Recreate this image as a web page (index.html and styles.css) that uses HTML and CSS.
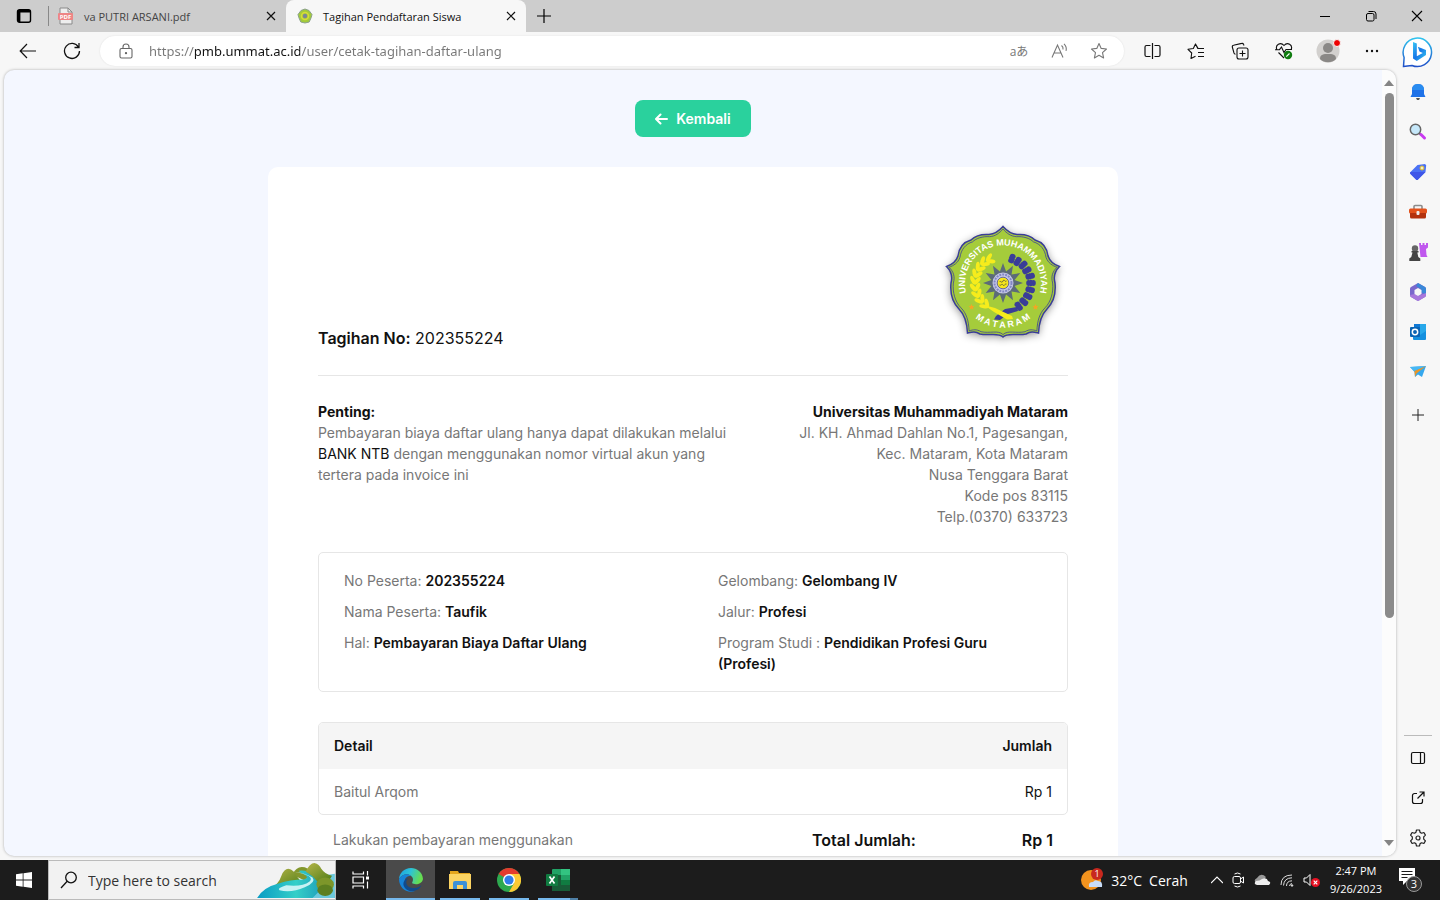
FILE: index.html
```html
<!DOCTYPE html>
<html lang="id">
<head>
    <meta charset="UTF-8">
    <meta name="viewport" content="width=device-width, initial-scale=1.0">
    <title>Tagihan Pendaftaran Siswa</title>
    <link rel="stylesheet" href="styles.css">
</head>
<body>
    <!-- Tab browser -->
    <header class="tabbar">
        <button class="tab-menu" aria-label="Menu tab">
            <svg width="16" height="16" viewBox="0 0 16 16" fill="none" stroke="#000" stroke-width="1.4"><rect x="1.5" y="1.7" width="13" height="12.6" rx="2"/><path d="M2 3.2h12M3.2 2v12" stroke-width="2.4"/></svg>
        </button>
        <div class="tab">
            <svg width="16" height="18" viewBox="0 0 16 18"><path d="M2 1h8l4 4v12H2z" fill="#eee" stroke="#8a8a8a"/><path d="M10 1v4h4" fill="none" stroke="#8a8a8a"/><rect x="0" y="6" width="15" height="7" rx="1" fill="#ee8585"/><text x="7.5" y="11.7" text-anchor="middle" font-size="6" font-weight="700" fill="#fff">PDF</text></svg>
            <span class="tab-title">va PUTRI ARSANI.pdf</span>
            <button class="tab-close" aria-label="Tutup tab"><svg width="10" height="10" viewBox="0 0 10 10" stroke="#111" stroke-width="1.2"><path d="M1 1l8 8M9 1l-8 8"/></svg></button>
        </div>
        <div class="tab active">
            <svg width="16" height="16" viewBox="0 0 16 16"><path d="M8 1l4 1.5 3 4-.8 3-2 4.5L8 15l-4.2-1-2-4.5-.8-3 3-4z" fill="#a3cb3a" stroke="#8aa08a"/><circle cx="8" cy="8" r="3.5" fill="none" stroke="#d8dc38" stroke-width="1.5"/><circle cx="8" cy="8" r="2.2" fill="#7b8596"/></svg>
            <span class="tab-title">Tagihan Pendaftaran Siswa</span>
            <button class="tab-close" aria-label="Tutup tab"><svg width="10" height="10" viewBox="0 0 10 10" stroke="#111" stroke-width="1.2"><path d="M1 1l8 8M9 1l-8 8"/></svg></button>
        </div>
        <button class="tab-new" aria-label="Tab baru"><svg width="14" height="14" viewBox="0 0 14 14" stroke="#000" stroke-width="1.2"><path d="M7 0v14M0 7h14"/></svg></button>
        <div class="window-controls">
            <button aria-label="Kecilkan"><svg width="10" height="10" viewBox="0 0 10 10" stroke="#000"><path d="M0 5.5h10"/></svg></button>
            <button aria-label="Pulihkan"><svg width="12" height="12" viewBox="0 0 12 12" fill="none" stroke="#000"><rect x="1.5" y="3.5" width="7.5" height="7.5" rx="1.5"/><path d="M3.5 1.5h5a2.5 2.5 0 0 1 2.5 2.5v5"/></svg></button>
            <button aria-label="Tutup"><svg width="12" height="12" viewBox="0 0 12 12" stroke="#000" stroke-width="1.1"><path d="M1 1l10 10M11 1L1 11"/></svg></button>
        </div>
    </header>

    <div class="window">
        <div class="browser">
            <!-- Bilah alamat -->
            <nav class="toolbar">
                <button class="nav-button" aria-label="Kembali"><svg width="18" height="16" viewBox="0 0 18 16" fill="none" stroke="#111" stroke-width="1.2"><path d="M17 8H1.5M8 1L1.2 8 8 15"/></svg></button>
                <button class="nav-button" aria-label="Muat ulang"><svg width="18" height="18" viewBox="0 0 18 18" fill="none" stroke="#111" stroke-width="1.3"><path d="M15.5 5.2A7.5 7.5 0 1 0 16.5 9M16 1v4.5h-4.5"/></svg></button>
                <div class="address">
                    <svg width="14" height="16" viewBox="0 0 14 16" fill="none" stroke="#666" stroke-width="1.1"><rect x="1" y="5.5" width="12" height="9.5" rx="1.5"/><path d="M4 5.5V4a3 3 0 0 1 6 0v1.5"/><circle cx="7" cy="10.2" r=".6" fill="#555"/></svg>
                    <input class="address-input" type="text" aria-label="Alamat" value="https://pmb.ummat.ac.id/user/cetak-tagihan-daftar-ulang">
                    <button aria-label="Terjemahkan" class="translate">aあ</button>
                    <button aria-label="Baca nyaring"><svg width="18" height="16" viewBox="0 0 18 16" fill="none" stroke="#777" stroke-width="1.1"><path d="M2 14.5L7.500 2 13 14.500M4 10h7M11.500 2.500a4 4 0 0 1 1.500 4M14 .8a7 7 0 0 1 2 7"/></svg></button>
                    <button aria-label="Favorit"><svg width="18" height="18" viewBox="0 0 18 18" fill="none" stroke="#777" stroke-width="1.1"><path d="M9 1.500l2.200 4.900 5.300.6-4 3.600 1.100 5.300L9 13.300l-4.600 2.600 1.100-5.300-4-3.600 5.300-.6z" stroke-linejoin="round"/></svg></button>
                </div>
                <div class="tools">
                    <button aria-label="Layar terpisah"><svg width="17" height="16" viewBox="0 0 17 16" fill="none" stroke="#111" stroke-width="1.2"><path d="M6.500 2.500h-4a1.500 1.500 0 0 0-1.500 1.500v8a1.500 1.500 0 0 0 1.500 1.500h4M10.500 2.500h4A1.500 1.500 0 0 1 16 4v8a1.500 1.500 0 0 1-1.500 1.500h-4M8.500 0v16"/></svg></button>
                    <button aria-label="Daftar favorit"><svg width="18" height="17" viewBox="0 0 18 17" fill="none" stroke="#111" stroke-width="1.1"><path d="M11 5.200L8.500 1 6.300 5.500 1 6.300l3.700 3.700L4 15.500l4.500-2.300M8.500 1l2.300 4.500H17M11 9.500h6M11 13.500h6" stroke-linejoin="round"/></svg></button>
                    <button aria-label="Koleksi"><svg width="18" height="18" viewBox="0 0 18 18" fill="none" stroke="#111" stroke-width="1.1"><rect x="6" y="6" width="11" height="11" rx="2"/><path d="M11.500 8.500v6M8.500 11.500h6M13 3.500l-.5-1.200a1.500 1.500 0 0 0-1.800-.9L2.500 3.200A1.500 1.500 0 0 0 1.300 5l1.700 6a2 2 0 0 0 1.500 1.300"/></svg></button>
                    <button aria-label="Performa"><svg width="18" height="18" viewBox="0 0 18 18" fill="none" stroke="#111" stroke-width="1.1"><path d="M9 16L3.500 10.500M1.800 7.500C0 3 5.500-.5 9 3.500c3.500-4 9-.5 7.200 4M0 7.700h4.500L6.500 5l2.500 5.500 2-3h6"/><circle cx="13" cy="13" r="4.200" fill="#107c10" stroke="none"/><path d="M11.300 14.700l3.200-3.200" stroke="#fff"/></svg></button>
                    <button aria-label="Profil"><svg width="26" height="26" viewBox="0 0 26 26"><circle cx="13" cy="13" r="11.500" fill="#d2d0ce"/><circle cx="13" cy="10" r="5" fill="#8a8886"/><path d="M5 21c0-5 4-5 8-5s8 0 8 5a11.500 11.500 0 0 1-16 0z" fill="#8a8886"/><circle cx="22" cy="5" r="3.500" fill="#e00" stroke="#f7f7f7"/></svg></button>
                    <button aria-label="Lainnya"><svg width="14" height="4" viewBox="0 0 14 4" fill="#111"><circle cx="2" cy="2" r="1.200"/><circle cx="7" cy="2" r="1.200"/><circle cx="12" cy="2" r="1.200"/></svg></button>
                </div>
            </nav>

            <div class="viewport">
                <main class="page">
                    <button class="back-button">
                        <svg width="13" height="12" viewBox="0 0 13 12" fill="none" stroke="#fff" stroke-width="2" stroke-linecap="round" stroke-linejoin="round"><path d="M12 6H1.500M5.500 1.500L1 6l4.500 4.500"/></svg>
                        Kembali
                    </button>

                    <section class="invoice">
                        <div class="invoice-header">
                            <p class="invoice-number"><b>Tagihan No:</b> 202355224</p>
                            <svg class="invoice-logo" width="130" height="133" viewBox="0 0 130 133">
                                <defs>
                                    <path id="shield" d="M65 9.500C69 14 73 17 79 17.500 86 17 93 19 97 23 104 25 109 31 110 39 112 45 117 48 121.500 49.500 117 54 115 59 117 66 118 76 115 86 109 92 103 98 101 106 100.500 116 96 115 93 114 88 117 79 119 70 115 65 120 60 115 51 119 42 117 37 114 34 115 29.500 116 29 106 27 98 21 92 15 86 12 76 13 66 15 59 13 54 8.500 49.500 13 48 18 45 20 39 21 31 26 25 33 23 37 19 44 17 51 17.500 57 17 61 14 65 9.500z"/>
                                    <path id="topArc" d="M28 75A38 38 0 1 1 102 75"/>
                                    <path id="bottomArc" d="M34 98A44 44 0 0 0 96 98"/>
                                    <path id="star" d="M0-3l.9 2 2.100.2-1.600 1.400.5 2.100L0 1.600l-1.900 1.100.5-2.100L-3-.8l2.100-.2z" fill="#f5a623"/>
                                    <g id="grain"><ellipse cx="-2.600" cy="0" rx="2" ry="4.600" transform="rotate(-32)"/><ellipse cx="2.600" cy="0" rx="2" ry="4.600" transform="rotate(32)"/></g>
                                    <g id="bead"><ellipse cx="-2.300" cy="0" rx="2.500" ry="3"/><ellipse cx="2.300" cy="0" rx="2.500" ry="3"/><path d="M0-3v6" stroke="#3a3d98" stroke-width="2"/></g>
                                    <filter id="glow" x="-20%" y="-20%" width="140%" height="140%"><feDropShadow dx="0" dy="2" stdDeviation="4" flood-color="#000" flood-opacity=".45"/></filter>
                                </defs>
                                <use href="#shield" fill="#a5cc3b" filter="url(#glow)"/>
                                <use href="#shield" fill="#a5cc3b" stroke="#3a3d98" stroke-width="1.500"/>
                                <use href="#shield" fill="none" stroke="#3a3d98" stroke-width=".8" transform="translate(65 66) scale(.955) translate(-65 -66)"/>
                                <g class="logo-text" fill="#fff">
                                    <text><textPath href="#topArc" startOffset="50%" text-anchor="middle">UNIVERSITAS MUHAMMADIYAH</textPath></text>
                                    <text><textPath href="#bottomArc" startOffset="50%" text-anchor="middle">M A T A R A M</textPath></text>
                                </g>
                                <g fill="#f6ec1c" transform="translate(65 66)">
                                    <use href="#grain" transform="rotate(-26) translate(0 -27) rotate(90)"/>
                                    <use href="#grain" transform="rotate(-40) translate(0 -28) rotate(90)"/>
                                    <use href="#grain" transform="rotate(-54) translate(0 -28) rotate(90)"/>
                                    <use href="#grain" transform="rotate(-68) translate(0 -28) rotate(90)"/>
                                    <use href="#grain" transform="rotate(-82) translate(0 -28) rotate(90)"/>
                                    <use href="#grain" transform="rotate(-96) translate(0 -28) rotate(90)"/>
                                    <use href="#grain" transform="rotate(-110) translate(0 -28) rotate(90)"/>
                                    <use href="#grain" transform="rotate(-124) translate(0 -28) rotate(90)"/>
                                    <use href="#grain" transform="rotate(-138) translate(0 -28) rotate(90)"/>
                                </g>
                                <g fill="#3a3d98" transform="translate(65 66)">
                                    <use href="#bead" transform="rotate(20) translate(0 -26) rotate(90)"/>
                                    <use href="#bead" transform="rotate(34) translate(0 -26) rotate(90)"/>
                                    <use href="#bead" transform="rotate(48) translate(0 -27) rotate(90)"/>
                                    <use href="#bead" transform="rotate(62) translate(0 -27) rotate(90)"/>
                                    <use href="#bead" transform="rotate(76) translate(0 -28) rotate(90)"/>
                                    <use href="#bead" transform="rotate(90) translate(0 -28) rotate(90)"/>
                                    <use href="#bead" transform="rotate(104) translate(0 -28) rotate(90)"/>
                                    <use href="#bead" transform="rotate(118) translate(0 -28) rotate(90)"/>
                                    <use href="#bead" transform="rotate(132) translate(0 -28) rotate(90)"/>
                                    <use href="#bead" transform="rotate(146) translate(0 -28) rotate(90)"/>
                                </g>
                                <path d="M79 90L67 92l-9 7-2 3.500 6 .5L70 97l10-3z" fill="#3a3d98"/>
                                <path d="M46 88l11 3 17 8 1 3-6 .5L56 95z" fill="#f6ec1c"/>
                                <path d="M85 66l-8.400 3.100 5.700 6.900-8.800-1.500 1.500 8.800-6.900-5.700L65 86l-3.100-8.400-6.900 5.700 1.500-8.800-8.800 1.500 5.700-6.900L45 66l8.400-3.100-5.700-6.900 8.800 1.500-1.500-8.800 6.900 5.700L65 46l3.100 8.400 6.900-5.700-1.500 8.800 8.800-1.500-5.700 6.900z" fill="#5c6b78"/>
                                <circle cx="65" cy="66" r="10.500" fill="#c4c6e6"/>
                                <circle cx="65" cy="66" r="8.500" fill="none" stroke="#8387c4" stroke-width="2" stroke-dasharray="2 1"/>
                                <circle cx="65" cy="66" r="5.800" fill="#f6e51c" stroke="#3a3d98" stroke-width=".7"/>
                                <path d="M61.500 65c1-2 2 2 3.500-1s2 2 3.500 0M61.500 68c2 1 2-2 3.500 0s2-2 3.500-1" fill="none" stroke="#69683a"/>
                                <use href="#star" x="33.500" y="90"/>
                                <use href="#star" x="97.500" y="90"/>
                            </svg>
                        </div>

                        <div class="invoice-intro">
                            <div class="notice">
                                <b>Penting:</b>
                                <p>Pembayaran biaya daftar ulang hanya dapat dilakukan melalui <span class="dark">BANK NTB</span> dengan menggunakan nomor virtual akun yang tertera pada invoice ini</p>
                            </div>
                            <address class="campus">
                                <b>Universitas Muhammadiyah Mataram</b><br>
                                Jl. KH. Ahmad Dahlan No.1, Pagesangan,<br>
                                Kec. Mataram, Kota Mataram<br>
                                Nusa Tenggara Barat<br>
                                Kode pos 83115<br>
                                Telp.(0370) 633723
                            </address>
                        </div>

                        <div class="student">
                            <div class="student-column">
                                <p>No Peserta: <b>202355224</b></p>
                                <p>Nama Peserta: <b>Taufik</b></p>
                                <p>Hal: <b>Pembayaran Biaya Daftar Ulang</b></p>
                            </div>
                            <div class="student-column">
                                <p>Gelombang: <b>Gelombang IV</b></p>
                                <p>Jalur: <b>Profesi</b></p>
                                <p>Program Studi : <b>Pendidikan Profesi Guru (Profesi)</b></p>
                            </div>
                        </div>

                        <div class="detail">
                            <table>
                                <thead>
                                    <tr><th>Detail</th><th>Jumlah</th></tr>
                                </thead>
                                <tbody>
                                    <tr><td>Baitul Arqom</td><td>Rp 1</td></tr>
                                </tbody>
                            </table>
                        </div>

                        <div class="total">
                            <p class="total-note">Lakukan pembayaran menggunakan</p>
                            <p class="total-sum"><b>Total Jumlah:</b><b>Rp 1</b></p>
                        </div>
                    </section>
                </main>
                <div class="scrollbar">
                    <svg width="10" height="6" viewBox="0 0 10 6"><path d="M0 6L5 0l5 6z" fill="#858585"/></svg>
                    <div class="scroll-track"><div class="scroll-thumb"></div></div>
                    <svg width="10" height="6" viewBox="0 0 10 6"><path d="M0 0l5 6 5-6z" fill="#858585"/></svg>
                </div>
            </div>
        </div>

        <!-- Bilah samping -->
        <aside class="sidebar">
            <button class="bing" aria-label="Bing"><svg width="32" height="32" viewBox="0 0 32 32"><defs><linearGradient id="ring" x1="0" y1="0" x2="0" y2="1"><stop offset="0" stop-color="#2fc3ee"/><stop offset="1" stop-color="#2050c8"/></linearGradient><linearGradient id="bee" x1="0" y1="0" x2="1" y2="1"><stop offset="0" stop-color="#38c8f4"/><stop offset=".5" stop-color="#1676e8"/><stop offset="1" stop-color="#38d0f0"/></linearGradient></defs><path d="M1.500 30.500l.6-9A14.200 14.200 0 1 1 10 29.500c-2 .2-5 .5-8.500 1z" fill="#fff" stroke="url(#ring)" stroke-width="1.500"/><path d="M11 6l3.800 1.500v12.800l6-3.300-3.300-1.500-1.700-4.700 8.200 3.200v5L14.800 25 11 22.500z" fill="url(#bee)"/></svg></button>
            <button aria-label="Notifikasi"><svg width="18" height="18" viewBox="0 0 18 18"><path d="M7 15h4l-1 2H8z" fill="#555"/><path d="M9 1C4.500 1 3 4 3 7v4l-1.500 3h15L15 11V7c0-3-1.500-6-6-6z" fill="#1f72e8"/><path d="M9 1C4.500 1 3 4 3 7h12c0-3-1.500-6-6-6z" fill="#2a8cf0"/></svg></button>
            <button aria-label="Cari"><svg width="18" height="18" viewBox="0 0 18 18"><path d="M10 10l2 2" stroke="#666" stroke-width="2"/><path d="M12 11.500l3.500 3.500" stroke="#c83af0" stroke-width="3" stroke-linecap="round"/><circle cx="6.500" cy="6.500" r="5.200" fill="#c6e8fa" stroke="#666" stroke-width="1.500"/></svg></button>
            <button aria-label="Belanja"><svg width="18" height="18" viewBox="0 0 18 18"><path d="M8.500 2L16 1l1.200 1.200L16.500 9 9 16.500q-1 1-2 0L1.500 11q-1-1 0-2z" fill="#4b72f5"/><path d="M1.500 9L16.500 9 9 16.500q-1 1-2 0L1.500 11q-1-1 0-2z" fill="#3f56e8"/><circle cx="13" cy="5" r="2" fill="#f4f0c0" stroke="#ddb82e"/></svg></button>
            <button aria-label="Alat"><svg width="18" height="18" viewBox="0 0 18 18"><path d="M5 6V3.500Q5 2.500 6 2.500h6q1 0 1 1V6" fill="none" stroke="#8c8c8c" stroke-width="1.600"/><rect x="0" y="5.500" width="18" height="5" rx="1.500" fill="#e3521c"/><path d="M1 10h16v4q0 1.500-1.500 1.500h-13Q1 15.500 1 14z" fill="#b3320e"/><rect x="7.500" y="8" width="3" height="4" rx="1" fill="#eee"/></svg></button>
            <button aria-label="Permainan"><svg width="20" height="20" viewBox="0 0 20 20"><path d="M11 1h2v2h1.500V1h2v2H18V1h2v4.500L18 7l.5 6 1 2h-7z" fill="#c058ee"/><circle cx="7" cy="6.500" r="3.200" fill="#666"/><path d="M3.500 9h7v1.500H9.300l1 4.500 2 1.500v2.500h-11v-2.500l2-1.500 1.200-4.500h-1z" fill="#444"/></svg></button>
            <button aria-label="Microsoft 365"><svg width="18" height="18" viewBox="0 0 18 18"><path d="M9 0l7 4q1 .6 1 1.800v6.400q0 1.200-1 1.800l-6 3.600q-1 .5-2 0L2 14q-1-.6-1-1.800V5.800Q1 4.600 2 4z" fill="#7a68cc"/><path d="M9 0l7 4q1 .6 1 1.800V12l-5-3V6L7 3z" fill="#3a88d8"/><path d="M1 12l5-1 3 2 8-3v2.200q0 1.200-1 1.800l-6 3.600q-1 .5-2 0L2 14q-1-.6-1-2z" fill="#a878dc"/><path d="M9 5l3.500 2v4L9 13l-3.500-2V7z" fill="#f7f7f7"/></svg></button>
            <button aria-label="Outlook"><svg width="18" height="18" viewBox="0 0 18 18"><rect x="5" y="1" width="12" height="12" fill="#28a8ea"/><path d="M5 1h6v6H5z" fill="#0f78d4"/><path d="M4 9l7 3 6-4v8q0 1-1 1H5q-1 0-1-1z" fill="#1490df"/><rect x="1" y="4" width="10" height="10" rx="1" fill="#0a64b4"/><circle cx="6" cy="9" r="2.700" fill="none" stroke="#fff" stroke-width="1.500"/></svg></button>
            <button aria-label="Drop"><svg width="18" height="18" viewBox="0 0 18 18"><path d="M1 4l16-1-4 11-4-2.500L6 14 5.500 9z" fill="#35a8ee"/><path d="M1 4l16-1L5.500 8z" fill="#48b8f4"/><path d="M5.500 8L17 3 7.500 10.500 6 14z" fill="#e8962a"/></svg></button>
            <button class="add" aria-label="Tambah"><svg width="12" height="12" viewBox="0 0 12 12" stroke="#222"><path d="M6 0v12M0 6h12"/></svg></button>
            <div class="sidebar-bottom">
                <button aria-label="Panel"><svg width="16" height="16" viewBox="0 0 16 16" fill="none" stroke="#111" stroke-width="1.200"><rect x="1.500" y="2.500" width="13" height="11" rx="1.500"/><path d="M10.500 2.500v11"/></svg></button>
                <button aria-label="Buka tautan"><svg width="14" height="14" viewBox="0 0 14 14" fill="none" stroke="#111" stroke-width="1.200"><path d="M6 2.500H3.500a2 2 0 0 0-2 2v6a2 2 0 0 0 2 2h6a2 2 0 0 0 2-2V8M8.500 1H13v4.500M13 1L6.500 7.500"/></svg></button>
                <button aria-label="Pengaturan"><svg width="18" height="18" viewBox="0 0 18 18" fill="none" stroke="#222" stroke-width="1.200" stroke-linejoin="round"><path d="M7.500 1h3l.6 2.400 1.500.8 2.300-.7 1.500 2.600-1.700 1.800v2.200l1.700 1.800-1.500 2.600-2.300-.7-1.500.8L10.500 17h-3l-.6-2.400-1.500-.8-2.300.7-1.500-2.600 1.700-1.800V7.900L1.600 6.100l1.500-2.600 2.300.7 1.500-.8z"/><circle cx="9" cy="9" r="2"/></svg></button>
            </div>
        </aside>
    </div>

    <!-- Taskbar -->
    <footer class="taskbar">
        <button class="start" aria-label="Start"><svg width="16" height="16" viewBox="0 0 16 16" fill="#fff"><path d="M0 2.300L6.700 1.300v6.300H0zM7.500 1.200L16 0v7.600H7.500zM0 8.400h6.700v6.300L0 13.700zM7.500 8.400H16V16l-8.500-1.200z"/></svg></button>
        <div class="search">
            <svg width="18" height="18" viewBox="0 0 18 18" fill="none" stroke="#111" stroke-width="1.300"><circle cx="11" cy="6.500" r="5.300"/><path d="M7.200 10.300L1 17"/></svg>
            <input type="text" aria-label="Type here to search" placeholder="Type here to search">
            <svg width="78" height="35" viewBox="0 0 80 36"><defs><linearGradient id="hill" x1="0" y1="0" x2="1" y2="1"><stop offset="0" stop-color="#b6b548"/><stop offset="1" stop-color="#4f7d18"/></linearGradient><linearGradient id="river" x1="0" y1="0" x2="1" y2="0"><stop offset="0" stop-color="#0a9cc4"/><stop offset=".5" stop-color="#35cfc8"/><stop offset="1" stop-color="#1489b4"/></linearGradient></defs><path d="M36 12q4-8 10-8t11 6l-8 8z" fill="#83972c"/><path d="M14 26q8-4 11-13 3-7 7-7 6 1 9 8l5 6-14 6z" fill="url(#hill)"/><path d="M0 36q6-11 22-15 12-4 26-4 6-2 1-5-5-2-6-4 8-1 16 3 20 5 19 9l2 16z" fill="url(#river)"/><path d="M38 9q22 4 16 10-8 6-24 4-10 3-7 5 12 3 26-3 12-5 8-10-8-5-19-6z" fill="#c7f2f4"/><path d="M61 14q20 4 16 8l-8 2-12 12h23V11z" fill="#6bc8dc"/><path d="M50 9q4-9 9-9 5 1 7 6 4 6 11 7-2 5-7 6-4-2-8 0-6-7-12-10z" fill="url(#hill)"/><ellipse cx="70" cy="22" rx="9" ry="7" fill="#7d962a"/><ellipse cx="70" cy="28" rx="8" ry="6" fill="#5d7f20"/></svg>
        </div>
        <button class="app task-view" aria-label="Tampilan tugas"><svg width="18" height="18" viewBox="0 0 18 18" fill="none" stroke="#fff" stroke-width="1.200"><path d="M1 .5v2.500h10.500V.5M1 17.500v-2.500h10.500v2.500M1 6h10.500v6H1zM15.500 0v4.500M15.500 10.500v7"/><path d="M14 7h3" stroke-width="3"/></svg></button>
        <button class="app open current" aria-label="Edge"><svg width="24" height="24" viewBox="0 0 24 24"><defs><linearGradient id="edgeTop" x1="0" y1="0" x2="1" y2=".3"><stop offset="0" stop-color="#1c9fe0"/><stop offset=".5" stop-color="#2cc3d8"/><stop offset="1" stop-color="#66dd50"/></linearGradient></defs><path d="M12 0C5 0 .5 5 0 11c3-5 9-6 12-3 3 2 2 5 1 7 2 2 10 2 11-4C23.500 4 18 0 12 0z" fill="url(#edgeTop)"/><path d="M0 11c3-5 9-6 12-3-5 0-7 3-6 7 1 6 6 8 10 8-8 3-16-3-16-12z" fill="#1683d8"/><path d="M9.500 10c-5 4-1 11 6 10 3 0 5-1 7-3-2 5-8 7-12 6-8-3-8-11-1-13z" fill="#114a8b"/></svg></button>
        <button class="app open inset" aria-label="File Explorer"><svg width="22" height="20" viewBox="0 0 22 20"><path d="M1 1h8l1 2h11v15H1z" fill="#e5a61c"/><path d="M0 4h22v15H0z" fill="#fcd462"/><path d="M4 19v-6q0-2 2-2h10q2 0 2 2v6h-4v-4H8v4z" fill="#3d91d6"/></svg></button>
        <button class="app open inset" aria-label="Chrome"><svg width="24" height="24" viewBox="0 0 24 24"><circle cx="12" cy="12" r="12" fill="#2da94f"/><path d="M12 12L1.600 6A12 12 0 0 1 22.400 6z" fill="#e33b2e"/><path d="M22.400 6A12 12 0 0 1 12 24l5.200-9L12 6z" fill="#fcc934"/><circle cx="12" cy="12" r="6" fill="#fff"/><circle cx="12" cy="12" r="4.600" fill="#2f7de9"/></svg></button>
        <button class="app open inset excel" aria-label="Excel"><svg width="24" height="22" viewBox="0 0 24 22"><rect x="6" y="0" width="18" height="22" rx="1" fill="#21a366"/><path d="M15 0h9v6h-9z" fill="#33c481"/><path d="M15 11h9v5h-9z" fill="#107c41"/><path d="M6 16h18v6H6zM6 6h9v10H6z" fill="#185c37"/><rect x="0" y="5" width="12" height="12" rx="1" fill="#107c41"/><path d="M3.500 7.500l5 7M8.500 7.500l-5 7" stroke="#fff" stroke-width="1.700"/></svg></button>
        <div class="tray">
            <div class="weather">
                <svg width="24" height="24" viewBox="0 0 24 24"><circle cx="11" cy="12" r="10" fill="#f2931e"/><path d="M9 19q-1-5 4-5 2-3 5-1 5 0 4 6z" fill="#c8dcf8"/><circle cx="17" cy="6" r="6" fill="#c8281e"/><text x="17" y="9" text-anchor="middle" font-size="9" fill="#fff">1</text></svg>
                <span>32°C</span><span>Cerah</span>
            </div>
            <div class="tray-icons">
                <svg width="12" height="8" viewBox="0 0 12 8" fill="none" stroke="#fff" stroke-width="1.200"><path d="M0 7l6-6 6 6"/></svg>
                <svg width="12" height="16" viewBox="0 0 12 16" fill="none" stroke="#fff"><rect x="1" y="4.500" width="7.500" height="7" rx="1.500"/><path d="M8.500 7l3-2v6l-3-2M2.500 2q3-2 6 0M2.500 14q3 2 6 0"/></svg>
                <svg width="18" height="12" viewBox="0 0 18 12"><path d="M3 9Q0 6 4 4q4-6 9-1l-5 6z" fill="#999"/><path d="M4 11Q0 10 3 7q4 0 6-2 5-2 6 2 4 1 1 4z" fill="#eee"/></svg>
                <svg width="14" height="14" viewBox="0 0 14 14" fill="none" stroke="#ddd"><path d="M1 12Q1 2 12 2M3.500 12.500Q4 5 12 4.800M6.500 13q0-5 5.500-5.200M9.500 13q0-2 2.500-2.500"/><circle cx="12" cy="12.500" r=".8" fill="#fff"/></svg>
                <svg width="18" height="16" viewBox="0 0 18 16"><path d="M1 6h2.500L7 2.500v11L3.500 10H1z" fill="none" stroke="#fff"/><circle cx="12.500" cy="10.500" r="4.500" fill="#e81123"/><path d="M10.700 8.700l3.600 3.600M14.300 8.700l-3.600 3.600" stroke="#fff" stroke-width="1.200"/></svg>
            </div>
            <div class="clock"><span>2:47 PM</span><span>9/26/2023</span></div>
            <svg class="action-center" width="26" height="32" viewBox="0 0 26 32"><path d="M1 4h16v13H9l-4 4v-4H1z" fill="#fff"/><path d="M3.500 7.500h11M3.500 10.500h11M3.500 13.500h6" stroke="#1c1c1c"/><circle cx="16" cy="20" r="7.500" fill="#333" stroke="#999"/><text x="16" y="24" text-anchor="middle" font-size="11" fill="#fff">3</text></svg>
        </div>
    </footer>
</body>
</html>
```
FILE: styles.css
```css
* {
    box-sizing: border-box;
}
body {
    font-family: 'Open Sans', 'Noto Sans', sans-serif;
    font-size: 11px;
    margin: 0;
    height: 100vh;
    display: flex;
    flex-direction: column;
    overflow: hidden;
    background-color: #f7f7f7;
    color: #111;
}
p {
    margin: 0;
}
button {
    background: none;
    border: none;
    padding: 0;
    font-family: inherit;
    display: flex;
    align-items: center;
    justify-content: center;
    cursor: pointer;
}
input {
    border: none;
    outline: none;
    background: none;
    padding: 0;
    min-width: 0;
    font-family: inherit;
}
svg {
    flex-shrink: 0;
}

/* Tab */
.tabbar {
    display: flex;
    height: 32px;
    background-color: #cdcdcd;
}
.tab-menu {
    width: 48px;
}
.tab {
    display: flex;
    align-items: center;
    gap: 10px;
    width: 238px;
    padding: 0 10px;
    color: #444;
}
.tab-title {
    flex: 1;
    white-space: nowrap;
}
.tab.active {
    background-color: #f7f7f7;
    border-radius: 8px 8px 0 0;
    width: 240px;
    padding-left: 11px;
    color: #111;
}
.tab:not(.active) {
    background: linear-gradient(#888, #888) 0 50% / 1px 20px no-repeat;
}
.tab-new {
    width: 36px;
}
.window-controls {
    display: flex;
    margin-left: auto;
}
.window-controls button {
    width: 46px;
}

/* Jendela */
.window {
    flex: 1;
    display: flex;
    min-height: 0;
}
.browser {
    flex: 1;
    display: flex;
    flex-direction: column;
    min-width: 0;
}
.toolbar {
    display: flex;
    align-items: center;
    height: 38px;
    padding: 0 2px 0 6px;
}
.nav-button {
    width: 44px;
    height: 30px;
}
.address {
    flex: 1;
    display: flex;
    align-items: center;
    height: 30px;
    margin: 0 6px;
    padding: 0 5px 0 19px;
    border-radius: 15px;
    background-color: #fff;
    box-shadow: 0 0 2px rgba(0, 0, 0, 0.1);
}
.address button {
    width: 40px;
    height: 30px;
}
.address .translate {
    font-family: 'Open Sans', 'Noto Sans CJK JP', sans-serif;
    font-size: 12px;
    color: #777;
}
.address-input {
    flex: 1;
    margin-left: 16px;
    font-family: 'Noto Sans', sans-serif;
    font-size: 13px;
    line-height: 20px;
    color: transparent;
    background: linear-gradient(to right, #777 46px, #111 46px, #111 151px, #777 151px);
    background-clip: text;
    -webkit-background-clip: text;
}
.tools {
    display: flex;
}
.tools button {
    width: 44px;
    height: 30px;
}
.viewport {
    flex: 1;
    display: flex;
    min-height: 0;
    margin: 0 0 4px 4px;
    border-radius: 10px;
    overflow: hidden;
    background-color: #f4f7ff;
    box-shadow: 0 0 3px rgba(0, 0, 0, 0.3);
}
.scrollbar {
    display: flex;
    flex-direction: column;
    align-items: center;
    gap: 7px;
    width: 14px;
    padding: 10px 0;
    background-color: #fcfcfc;
}
.scroll-track {
    flex: 1;
}
.scroll-thumb {
    width: 9px;
    height: 71%;
    border-radius: 5px;
    background-color: #8b8b8b;
}

/* Tagihan */
.page {
    flex: 1;
    display: flex;
    flex-direction: column;
    align-items: center;
    gap: 30px;
    padding: 30px 20px;
    overflow: hidden;
    font-family: Inter, sans-serif;
    font-size: 14px;
    line-height: 21px;
    color: #777;
}
.page > * {
    flex-shrink: 0;
}
.page b, .page th {
    font-weight: 600;
    color: #111;
}
.back-button {
    gap: 8px;
    padding: 8px 20px;
    border-radius: 8px;
    background-color: #2ad19d;
    color: #fff;
    font-size: 14px;
    line-height: 21px;
    font-weight: 600;
}
.back-button:hover {
    background-color: #24bb8c;
}
.invoice {
    width: 100%;
    max-width: 850px;
    padding: 50px;
    border-radius: 10px;
    background-color: #fff;
}
.invoice-header {
    display: flex;
    justify-content: space-between;
    align-items: flex-end;
    padding-bottom: 25px;
    border-bottom: 1px solid #e6e6e6;
}
.invoice-number {
    font-size: 16px;
    line-height: 24px;
    color: #111;
}
.logo-text {
    font-family: 'Liberation Sans', sans-serif;
    font-size: 9px;
    font-weight: 700;
}
.invoice-intro {
    display: flex;
    justify-content: space-between;
    padding: 25px 0;
}
.page .invoice-intro b {
    font-weight: 700;
}
.notice {
    max-width: 420px;
}
.dark {
    color: #111;
}
.campus {
    font-style: normal;
    text-align: right;
}
.student {
    display: flex;
    padding: 17px 25px;
    border: 1px solid #e6e6e6;
    border-radius: 5px;
}
.student-column {
    flex: 1;
    display: flex;
    flex-direction: column;
    gap: 10px;
    padding-right: 50px;
}
.student-column + .student-column {
    padding-left: 25px;
    padding-right: 25px;
}
.detail {
    margin-top: 30px;
    border: 1px solid #e6e6e6;
    border-radius: 5px;
    overflow: hidden;
}
.detail table {
    width: 100%;
    border-collapse: collapse;
}
.detail th, .detail td {
    padding: 12px 15px;
    text-align: left;
}
.detail th {
    padding-bottom: 13px;
    background-color: #f5f5f5;
}
.detail th:last-child, .detail td:last-child {
    text-align: right;
}
.detail td:last-child {
    color: #111;
}
.total {
    display: flex;
    justify-content: space-between;
    padding: 13px 15px;
    line-height: 24px;
}
.total-sum {
    display: flex;
    justify-content: space-between;
    width: 241px;
    font-size: 16px;
}

/* Bilah samping */
.sidebar {
    display: flex;
    flex-direction: column;
    align-items: center;
    width: 44px;
}
.sidebar button {
    width: 40px;
    height: 40px;
}
.sidebar .add {
    margin-top: 3px;
}
.sidebar-bottom {
    margin-top: auto;
    padding: 2px 0;
    border-top: 1px solid #bbb;
    width: 28px;
    display: flex;
    flex-direction: column;
    align-items: center;
}

/* Taskbar */
.taskbar {
    display: flex;
    height: 40px;
    background-color: #1c1c1c;
    color: #fff;
}
.start {
    width: 48px;
}
.search {
    display: flex;
    align-items: center;
    width: 288px;
    padding-left: 11px;
    background-color: #f2f2f2;
    border: 1px solid #bbb;
}
.search input {
    flex: 1;
    margin-left: 10px;
    font-size: 14px;
}
.search input::placeholder {
    color: #333;
    opacity: 1;
}
.app {
    width: 49px;
}
.task-view {
    margin-right: 1px;
}
.app.open {
    background: linear-gradient(#76b9ed, #76b9ed) 50% 100% / 100% 2px no-repeat;
}
.app.current {
    background-color: #4a4a4a;
}
.app.inset {
    background-size: 40px 2px;
}
.app.excel {
    background: linear-gradient(to right, #76b9ed 32px, #4f80a6 32px) 50% 100% / 40px 2px no-repeat;
}
.tray {
    display: flex;
    align-items: center;
    margin-left: auto;
    padding-right: 16px;
}
.weather {
    display: flex;
    align-items: center;
    gap: 7px;
    font-size: 14px;
}
.tray-icons {
    display: flex;
    align-items: center;
    gap: 9px;
    margin: 0 9px 0 23px;
}
.clock {
    display: flex;
    flex-direction: column;
    align-items: center;
    font-size: 11px;
    line-height: 18px;
}
.action-center {
    margin-left: 16px;
}
```
